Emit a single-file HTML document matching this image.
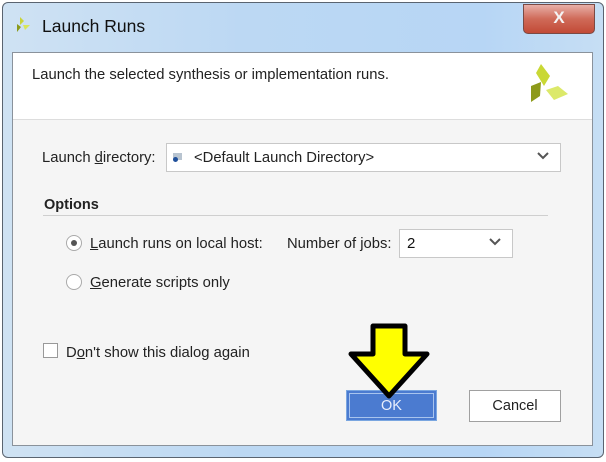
<!DOCTYPE html><html><head><style>
body{margin:0;width:606px;height:462px;background:#fff;font-family:"Liberation Sans",sans-serif;position:relative;overflow:hidden}
.a{position:absolute}
.u{text-decoration:underline}
.t{font-size:14.8px;color:#222}
</style></head><body>
<div class="a" style="left:2px;top:2px;width:600px;height:454px;border:1px solid #5a6470;border-radius:6px;background:linear-gradient(90deg,#cfe2f3,#bcd8f3 40%,#b7d6f5 80%,#c6def4);"></div>
<svg class="a" style="left:14px;top:15px" width="18" height="18" viewBox="0 0 18 18"><polygon points="6,2 10,6 6,10" fill="#c8d43a"/><polygon points="3,9 7,12 3,17" fill="#8a9a1a"/><polygon points="9,10 16,10 11,15" fill="#d8e65a"/></svg>
<div class="a" style="left:42px;top:16px;font-size:17.5px;color:#111">Launch Runs</div>
<div class="a" style="left:523px;top:4px;width:70px;height:28px;border:1px solid #7a4a44;border-radius:0 0 5px 5px;background:linear-gradient(#e8b0a8,#cf6a58 50%,#c24a36);color:#f4f4f4;font-size:17px;font-weight:bold;text-align:center;line-height:26px">X</div>
<div class="a" style="left:12px;top:52px;width:579px;height:392px;border:1px solid #8a929b;background:#f5f5f5"></div>
<div class="a" style="left:13px;top:53px;width:579px;height:66px;background:#fff;border-bottom:1px solid #ddd"></div>
<div class="a t" style="left:32px;top:67px">Launch the selected synthesis or implementation runs.</div>
<svg class="a" style="left:528px;top:64px" width="42" height="42" viewBox="0 0 42 42"><polygon points="13,0 22,12 16,22 8,9" fill="#c9d835"/><polygon points="3,22 13,18 12,32 3,38" fill="#8d9a1a"/><polygon points="18,26 30,22 40,30 26,36" fill="#dce96a"/></svg>
<div class="a t" style="left:42px;top:150px">Launch <span class="u">d</span>irectory:</div>
<div class="a" style="left:166px;top:143px;width:393px;height:27px;border:1px solid #c8c8c8;background:#fff"></div>
<div class="a" style="left:173px;top:153px;width:9px;height:7px;background:#b8c4d0"></div><div class="a" style="left:173px;top:157px;width:5px;height:5px;border-radius:50%;background:#1f4f9a"></div>
<div class="a t" style="left:194px;top:150px">&lt;Default Launch Directory&gt;</div>
<svg class="a" style="left:537px;top:152px" width="12" height="8"><path d="M1 1 L6 6 L11 1" stroke="#555" stroke-width="2" fill="none"/></svg>
<div class="a" style="left:44px;top:197px;font-size:14.5px;font-weight:bold;color:#222">Options</div>
<div class="a" style="left:43px;top:215px;width:505px;height:1px;background:#cfcfcf"></div>
<div class="a" style="left:66px;top:235px;width:14px;height:14px;border:1px solid #aaa;border-radius:50%;background:#fff"></div>
<div class="a" style="left:71px;top:240px;width:6px;height:6px;border-radius:50%;background:#555"></div>
<div class="a t" style="left:90px;top:236px"><span class="u">L</span>aunch runs on local host:</div>
<div class="a t" style="left:287px;top:236px">Number of <span class="u">j</span>obs:</div>
<div class="a" style="left:399px;top:229px;width:112px;height:27px;border:1px solid #c8c8c8;background:#fff"></div>
<div class="a" style="left:407px;top:235px;font-size:15px;color:#111">2</div>
<svg class="a" style="left:489px;top:238px" width="12" height="8"><path d="M1 1 L6 6 L11 1" stroke="#555" stroke-width="2" fill="none"/></svg>
<div class="a" style="left:66px;top:274px;width:14px;height:14px;border:1px solid #aaa;border-radius:50%;background:#fff"></div>
<div class="a t" style="left:90px;top:275px"><span class="u">G</span>enerate scripts only</div>
<div class="a" style="left:43px;top:343px;width:13px;height:13px;border:1px solid #999;background:#fff"></div>
<div class="a t" style="left:66px;top:345px">D<span class="u">o</span>n't show this dialog again</div>
<div class="a" style="left:346px;top:390px;width:89px;height:29px;border:1px solid #7aa6e0;background:#4b7bd0;box-shadow:inset 0 0 0 2px #4b7bd0,inset 0 0 0 3px #a8c4ee"></div>
<div class="a" style="left:346px;top:398px;width:91px;text-align:center;font-size:14.5px;color:#e8eefc">OK</div>
<div class="a" style="left:469px;top:390px;width:90px;height:30px;border:1px solid #a0a0a0;background:#fff"></div>
<div class="a" style="left:469px;top:398px;width:92px;text-align:center;font-size:14.5px;color:#222">Cancel</div>
<svg class="a" style="left:345px;top:320px" width="90" height="80" viewBox="0 0 90 80"><polygon points="28,6 60,6 60,34 82,34 44,76 6,34 28,34" fill="#ffff00" stroke="#000" stroke-width="5" stroke-linejoin="round"/></svg>
</body></html>
